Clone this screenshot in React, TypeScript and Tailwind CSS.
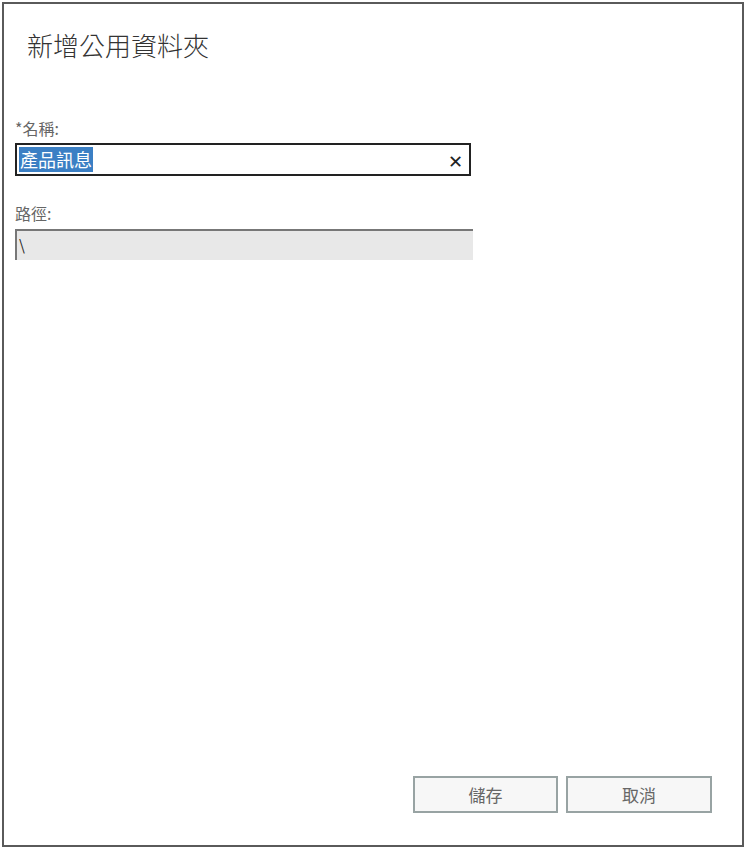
export default function App() {
  return (
    <div
      className="w-[746px] h-[850px] bg-white pl-[2px] pt-[2px]"
      style={{ fontFamily: '"Noto Sans CJK TC", "Noto Sans", sans-serif' }}
    >
      <div className="w-[742px] h-[845px] border-2 border-[#5a5a5a] flex flex-col">
        <h1 className="ml-[23px] mt-[24px] text-[26px] leading-[34px] font-light text-[#333]">
          新增公用資料夾
        </h1>

        <div className="ml-[11px] mt-[55px] flex flex-col">
          <label className="text-[16px] leading-[22px] text-[#666]">*名稱:</label>
          <div className="mt-[4px] w-[456px] h-[33px] border-2 border-[#222] flex items-center pl-[2px] pr-[6px]">
            <span className="bg-[#3b7fc4] text-white text-[18px] leading-[25px] px-[1px]">產品訊息</span>
            <span className="ml-auto text-[#222] text-[18px] leading-none">✕</span>
          </div>

          <label className="mt-[26px] text-[16px] leading-[22px] text-[#666]">路徑:</label>
          <div className="mt-[5px] w-[458px] h-[31px] bg-[#e8e8e8] border-t-2 border-l-2 border-[#777] flex items-center pl-[2px] text-[15px] text-[#222]">
            \
          </div>
        </div>

        <div className="mt-auto mb-[32px] flex justify-end gap-[8px] pr-[30px]">
          <button className="w-[145px] h-[37px] border-2 border-[#98a3a3] bg-[#f7f7f7] text-[17px] text-[#666]">
            儲存
          </button>
          <button className="w-[146px] h-[37px] border-2 border-[#98a3a3] bg-[#f7f7f7] text-[17px] text-[#666]">
            取消
          </button>
        </div>
      </div>
    </div>
  )
}
